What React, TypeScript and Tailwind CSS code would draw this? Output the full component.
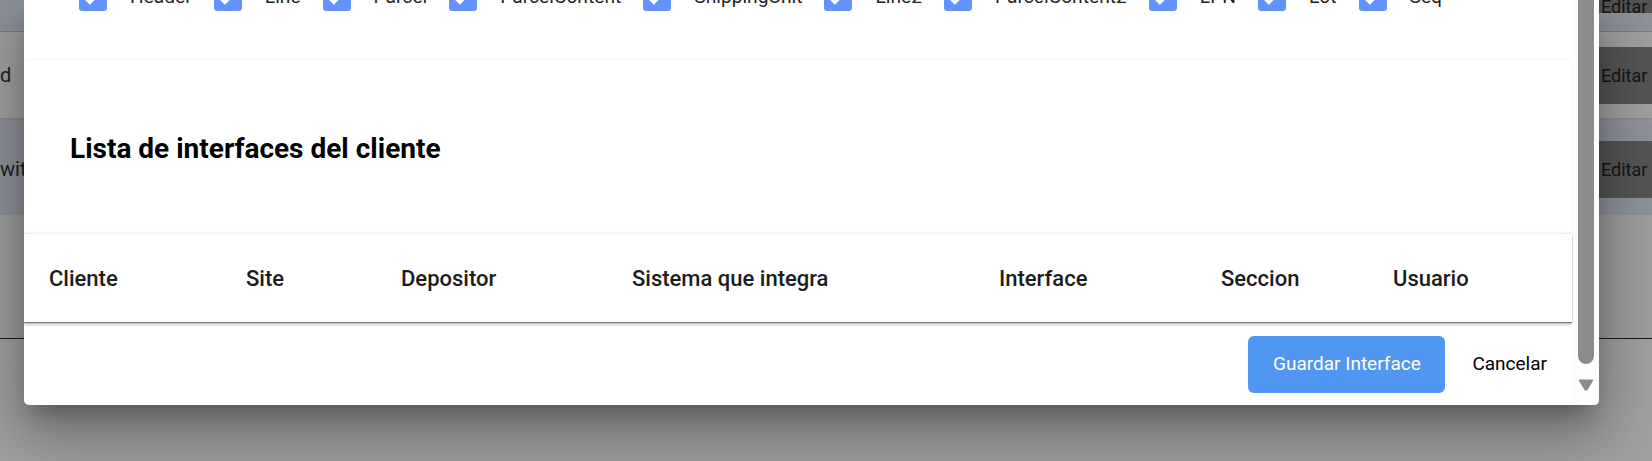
const checks = [
  "Header",
  "Line",
  "Parcel",
  "ParcelContent",
  "ShippingUnit",
  "Line2",
  "ParcelContent2",
  "LPN",
  "Lot",
  "Seq",
];

const columns = [
  { label: "Cliente", w: "w-[197px]" },
  { label: "Site", w: "w-[155px]" },
  { label: "Depositor", w: "w-[231px]" },
  { label: "Sistema que integra", w: "w-[367px]" },
  { label: "Interface", w: "w-[222px]" },
  { label: "Seccion", w: "w-[172px]" },
  { label: "Usuario", w: "flex-1" },
];

const CheckedBox = () => (
  <svg width="28" height="28" viewBox="3 3 18 18" className="shrink-0">
    <path
      fill="#6393fa"
      d="M19 3H5c-1.11 0-2 .9-2 2v14c0 1.1.89 2 2 2h14c1.11 0 2-.9 2-2V5c0-1.1-.89-2-2-2zm-9 14l-5-5 1.41-1.41L10 14.17l7.59-7.59L19 8l-9 9z"
    />
  </svg>
);

const EditButton = ({ top }: { top: string }) => (
  <div className={`ml-auto flex w-[53px] shrink-0 items-center whitespace-nowrap bg-[#555555] pl-[2px] text-[18px] text-[#141414] ${top}`}>
    Editar
  </div>
);

const Background = () => (
  <div className="flex h-full flex-col font-['Roboto',sans-serif]">
    <div className="flex h-[31px] items-start bg-[#8e929b]">
      <EditButton top="h-[13px]" />
    </div>
    <div className="h-px bg-[#7b7b7b]" />
    <div className="flex h-[86px] items-center bg-[#a0a0a0]">
      <span className="text-[20px] text-[#1e1e1e]">d</span>
      <EditButton top="h-[57px]" />
    </div>
    <div className="h-[5px] bg-gradient-to-b from-[#8a8a8a] to-[#979aa1]" />
    <div className="flex h-[92px] items-center bg-[#8e929b] shadow-[0_2px_3px_rgba(0,0,0,0.25)]">
      <span className="text-[20px] text-[#1e1e1e]">wit</span>
      <EditButton top="h-[57px]" />
    </div>
    <div className="h-[123px] bg-[#9d9d9d]" />
    <div className="h-px bg-[#1a1a1a]" />
    <div className="flex-1 bg-[#a0a0a0]" />
  </div>
);

const Scrollbar = () => (
  <div className="flex w-[26px] shrink-0 flex-col items-center bg-[#fdfdfd]">
    <div className="h-[364px] w-[16px] rounded-b-[8px] bg-[#8b8b8b]" />
    <svg width="16" height="12" viewBox="0 0 16 12" className="mt-[15px]">
      <path d="M1 1h14l-6 10h-2z" fill="#8b8b8b" stroke="#8b8b8b" strokeLinejoin="round" />
    </svg>
  </div>
);

export default function App() {
  return (
    <div className="relative h-[461px] w-[1652px] overflow-hidden bg-[#a0a0a0]">
      <Background />

      <div className="absolute left-[24px] top-0 flex h-[405px] w-[1575px] overflow-hidden rounded-b-[5px] bg-white font-['Roboto',sans-serif] shadow-[0_15px_21px_-10px_rgba(0,0,0,0.3),0_33px_52px_4px_rgba(0,0,0,0.18),0_12px_63px_11px_rgba(0,0,0,0.15)]">
        <div className="flex min-w-0 flex-1 flex-col">
          <div className="-mt-[17px] flex h-[28px] items-center pl-[55px] text-[19.2px] text-[#222]">
            {checks.map((c) => (
              <div key={c} className="mr-[22px] flex items-center">
                <CheckedBox />
                <span className="ml-[23px] whitespace-nowrap">{c}</span>
              </div>
            ))}
          </div>

          <div className="mr-px mt-[49px] flex h-[174px] items-center rounded-[5px] bg-white pl-[46px] pt-[3px] shadow-[0_0_3px_rgba(0,0,0,0.09)]">
            <h2 className="text-[28px] font-bold text-black">Lista de interfaces del cliente</h2>
          </div>

          <div className="mr-px flex h-[88px] items-center bg-white shadow-[0_-1px_3px_rgba(0,0,0,0.06),0_1px_0_#7a7a7a,0_2px_3px_rgba(0,0,0,0.35)]">
            {columns.map((c) => (
              <div key={c.label} className={`${c.w} shrink-0 pl-[25px] text-[22px] font-medium text-[#1d1d1d]`}>
                {c.label}
              </div>
            ))}
          </div>

          <div className="flex flex-1 items-center justify-end pr-[26px] pt-[2px]">
            <button className="h-[57px] w-[197px] rounded-[6px] bg-[#5197f1] text-[19px] text-white">
              Guardar Interface
            </button>
            <button className="ml-[27px] text-[19px] text-black">Cancelar</button>
          </div>
        </div>
        <Scrollbar />
      </div>
    </div>
  );
}
